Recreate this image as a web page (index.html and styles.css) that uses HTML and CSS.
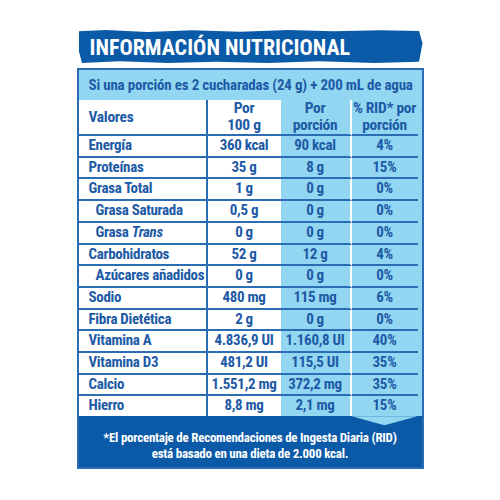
FILE: index.html
```html
<!DOCTYPE html>
<html>
  <head>
    <title>Información Nutricional</title>
    <meta charset="UTF-8">
    <link rel="stylesheet" href="styles.css">
  </head>

  <body>
    <div class="label">
      <div class="title">
        <h1>INFORMACIÓN NUTRICIONAL</h1>
      </div>
      <div class="panel">
        <div class="serving">Si una porción es 2 cucharadas (24 g) + 200 mL de agua</div>
        <table class="facts">
          <thead>
            <tr>
              <th class="name">Valores</th>
              <th class="white">Por<br>100 g</th>
              <th class="portion">Por<br>porción</th>
              <th>% RID* por<br>porción</th>
            </tr>
          </thead>
          <tbody>
            <tr><td class="name">Energía</td><td class="white">360 kcal</td><td class="portion">90 kcal</td><td>4%</td></tr>
            <tr><td class="name">Proteínas</td><td class="white">35 g</td><td class="portion">8 g</td><td>15%</td></tr>
            <tr><td class="name">Grasa Total</td><td class="white">1 g</td><td class="portion">0 g</td><td>0%</td></tr>
            <tr><td class="name sub">Grasa Saturada</td><td class="white">0,5 g</td><td class="portion">0 g</td><td>0%</td></tr>
            <tr><td class="name sub">Grasa <em>Trans</em></td><td class="white">0 g</td><td class="portion">0 g</td><td>0%</td></tr>
            <tr><td class="name">Carbohidratos</td><td class="white">52 g</td><td class="portion">12 g</td><td>4%</td></tr>
            <tr><td class="name sub">Azúcares añadidos</td><td class="white">0 g</td><td class="portion">0 g</td><td>0%</td></tr>
            <tr><td class="name">Sodio</td><td class="white">480 mg</td><td class="portion">115 mg</td><td>6%</td></tr>
            <tr><td class="name">Fibra Dietética</td><td class="white">2 g</td><td class="portion">0 g</td><td>0%</td></tr>
            <tr><td class="name">Vitamina A</td><td class="white">4.836,9 UI</td><td class="portion">1.160,8 UI</td><td>40%</td></tr>
            <tr><td class="name">Vitamina D3</td><td class="white">481,2 UI</td><td class="portion">115,5 UI</td><td>35%</td></tr>
            <tr><td class="name">Calcio</td><td class="white">1.551,2 mg</td><td class="portion">372,2 mg</td><td>35%</td></tr>
            <tr class="last"><td class="name">Hierro</td><td class="white">8,8 mg</td><td class="portion">2,1 mg</td><td class="rid">15%</td></tr>
          </tbody>
        </table>
        <div class="note">
          *El porcentaje de Recomendaciones de Ingesta Diaria (RID)<br>
          está basado en una dieta de 2.000 kcal.
        </div>
      </div>
    </div>
  </body>
</html>
```

FILE: styles.css
```css
body {
  margin: 0;
  padding: 0;
  background-color: #fff;
  font-family: "Roboto Condensed", "Open Sans Condensed", sans-serif;
  font-weight: bold;
  color: #1d5aa6;
}

.label {
  width: 347px;
  margin: 30px auto 0;
}

.title {
  height: 33px;
  margin: 0 1px 5px 2px;
  background-color: #0b5aa8;
  clip-path: polygon(0 4%, 8% 0, 20% 6%, 33% 1%, 47% 5%, 61% 0, 74% 4%, 88% 1%, 99% 3%, 100% 40%, 99% 96%, 86% 100%, 70% 95%, 55% 100%, 40% 96%, 26% 100%, 12% 95%, 1% 100%, 0 60%);
}

h1 {
  margin: 0;
  padding: 5px 0 0 11px;
  font-size: 22px;
  line-height: 26px;
  color: #fff;
}

.panel {
  border: 2px solid #2b6db5;
  background-color: #93d6f1;
}

.serving {
  height: 30px;
  padding: 0 0 0 10px;
  font-size: 15px;
  letter-spacing: -0.2px;
  line-height: 31px;
  white-space: nowrap;
}

.facts {
  width: 339px;
  border-spacing: 0;
  table-layout: fixed;
  font-size: 15px;
  letter-spacing: -0.3px;
}

.facts th,
.facts td {
  padding: 0;
  text-align: center;
  border-bottom: 2px solid #2b6db5;
  line-height: 19.7px;
  white-space: nowrap;
}

.facts th {
  font-size: 15.5px;
  line-height: 17px;
}

.facts th.name {
  text-align: left;
  padding-left: 10px;
}

.facts .name {
  width: 117px;
  text-align: left;
  padding-left: 10px;
  background-color: #fff;
  border-right: 2px solid #2b6db5;
}

.facts .sub {
  padding-left: 17px;
  width: 110px;
}

.facts .white {
  width: 73px;
  background-color: #fff;
}

.facts .portion {
  width: 69px;
  border-right: 2px solid #fff;
}

.facts em {
  font-style: italic;
}

.facts .last td {
  border-bottom: none;
}

.facts .rid {
  position: relative;
}

.facts .rid::after {
  content: "";
  position: absolute;
  top: 100%;
  left: 0;
  right: 0;
  height: 9px;
  background-color: #93d6f1;
  clip-path: polygon(0 0, 100% 0, 50% 100%);
}

.note {
  height: 37px;
  padding-top: 14px;
  background-color: #0b5aa8;
  color: #fff;
  text-align: center;
  font-size: 13px;
  letter-spacing: -0.25px;
  line-height: 16px;
}
```
